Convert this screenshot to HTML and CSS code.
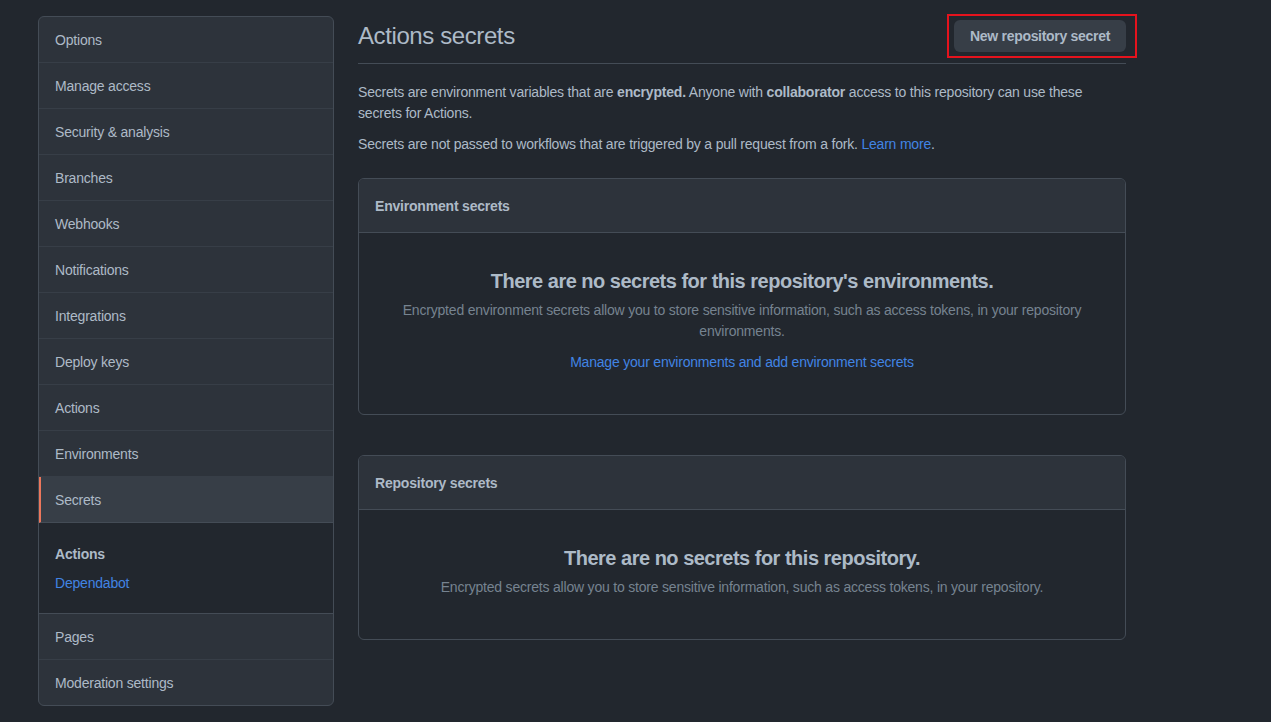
FILE: index.html
```html
<!DOCTYPE html>
<html lang="en">
<head>
<meta charset="utf-8">
<title>Actions secrets</title>
<link rel="stylesheet" href="styles.css">
</head>
<body>
<div class="page">
  <nav class="menu">
    <a class="menu-item">Options</a>
    <a class="menu-item">Manage access</a>
    <a class="menu-item">Security &amp; analysis</a>
    <a class="menu-item">Branches</a>
    <a class="menu-item">Webhooks</a>
    <a class="menu-item">Notifications</a>
    <a class="menu-item">Integrations</a>
    <a class="menu-item">Deploy keys</a>
    <a class="menu-item">Actions</a>
    <a class="menu-item">Environments</a>
    <a class="menu-item selected">Secrets</a>
    <div class="submenu">
      <span class="submenu-title">Actions</span>
      <a class="submenu-link">Dependabot</a>
    </div>
    <a class="menu-item">Pages</a>
    <a class="menu-item last">Moderation settings</a>
  </nav>

  <main class="content">
    <div class="subhead">
      <h2 class="subhead-title">Actions secrets</h2>
      <button class="btn">New repository secret</button>
    </div>
    <p class="lead">Secrets are environment variables that are <strong>encrypted.</strong> Anyone with <strong>collaborator</strong> access to this repository can use these secrets for Actions.</p>
    <p class="note">Secrets are not passed to workflows that are triggered by a pull request from a fork. <a class="link">Learn more</a>.</p>

    <section class="box">
      <div class="box-header">Environment secrets</div>
      <div class="box-body">
        <h3 class="blank-title">There are no secrets for this repository's environments.</h3>
        <p class="blank-desc">Encrypted environment secrets allow you to store sensitive information, such as access tokens, in your repository environments.</p>
        <a class="link blank-link">Manage your environments and add environment secrets</a>
      </div>
    </section>

    <section class="box">
      <div class="box-header">Repository secrets</div>
      <div class="box-body">
        <h3 class="blank-title">There are no secrets for this repository.</h3>
        <p class="blank-desc last">Encrypted secrets allow you to store sensitive information, such as access tokens, in your repository.</p>
      </div>
    </section>
  </main>
</div>
</body>
</html>
```

FILE: styles.css
```css
* { box-sizing: border-box; }

html, body {
  margin: 0;
  padding: 0;
  background: #22272e;
}

body {
  font-family: "Liberation Sans", Arial, sans-serif;
  font-size: 14px;
  line-height: 21px;
  letter-spacing: -0.2px;
  color: #adbac7;
}

.page {
  display: flex;
  align-items: flex-start;
  gap: 24px;
  padding: 16px 0 16px 38px;
}

/* Sidebar menu */
.menu {
  width: 296px;
  flex: none;
  display: flex;
  flex-direction: column;
  background: #2d333b;
  border: 1px solid #444c56;
  border-radius: 6px;
  overflow: hidden;
}

.menu-item {
  display: block;
  height: 46px;
  padding: 13px 16px 12px;
  color: #adbac7;
  border-bottom: 1px solid #373e47;
}

.menu-item.last { border-bottom: none; height: 45px; }

.menu-item.selected {
  background: #373e47;
  border-left: 2px solid #ec775c;
  padding-left: 14px;
  border-bottom: 1px solid #444c56;
}

.submenu {
  display: flex;
  flex-direction: column;
  gap: 8px;
  background: #22272e;
  padding: 21px 16px 19px;
  border-bottom: 1px solid #444c56;
}

.submenu-title { font-weight: bold; color: #adbac7; }
.submenu-link { color: #4184e4; }

/* Main content */
.content {
  width: 768px;
  flex: none;
}

.subhead {
  display: flex;
  align-items: center;
  justify-content: space-between;
  padding: 4px 0 11px;
  border-bottom: 1px solid #444c56;
}

.subhead-title {
  margin: 0;
  font-size: 24px;
  line-height: 32px;
  font-weight: 400;
  letter-spacing: -0.4px;
  color: #adbac7;
}

.btn {
  position: relative;
  height: 32px;
  padding: 0 16px;
  font-family: inherit;
  font-size: 14px;
  font-weight: bold;
  letter-spacing: -0.3px;
  color: #adbac7;
  background: #373e47;
  border: none;
  border-radius: 6px;
}

/* annotation frame drawn over the button */
.btn::after {
  content: "";
  position: absolute;
  top: -6px;
  bottom: -6px;
  left: -7px;
  right: -11px;
  border: 2px solid #e5131d;
}

.lead { margin: 18px 0 10px; }
.note { margin: 0 0 23px; }
.link { color: #4184e4; }
strong { font-weight: bold; }

.box {
  border: 1px solid #444c56;
  border-radius: 6px;
  margin-bottom: 40px;
  overflow: hidden;
}

.box-header {
  padding: 17px 16px 15px;
  background: #2d333b;
  border-bottom: 1px solid #444c56;
  font-weight: bold;
}

.box-body {
  padding: 33px 32px 41px;
  text-align: center;
}

.blank-title {
  margin: 0 0 4px;
  font-size: 20px;
  line-height: 30px;
  font-weight: bold;
  letter-spacing: -0.5px;
  color: #adbac7;
}

.blank-desc {
  margin: 0 0 10px;
  color: #768390;
}

.blank-desc.last { margin-bottom: 0; }

.blank-link { display: inline-block; }
```
